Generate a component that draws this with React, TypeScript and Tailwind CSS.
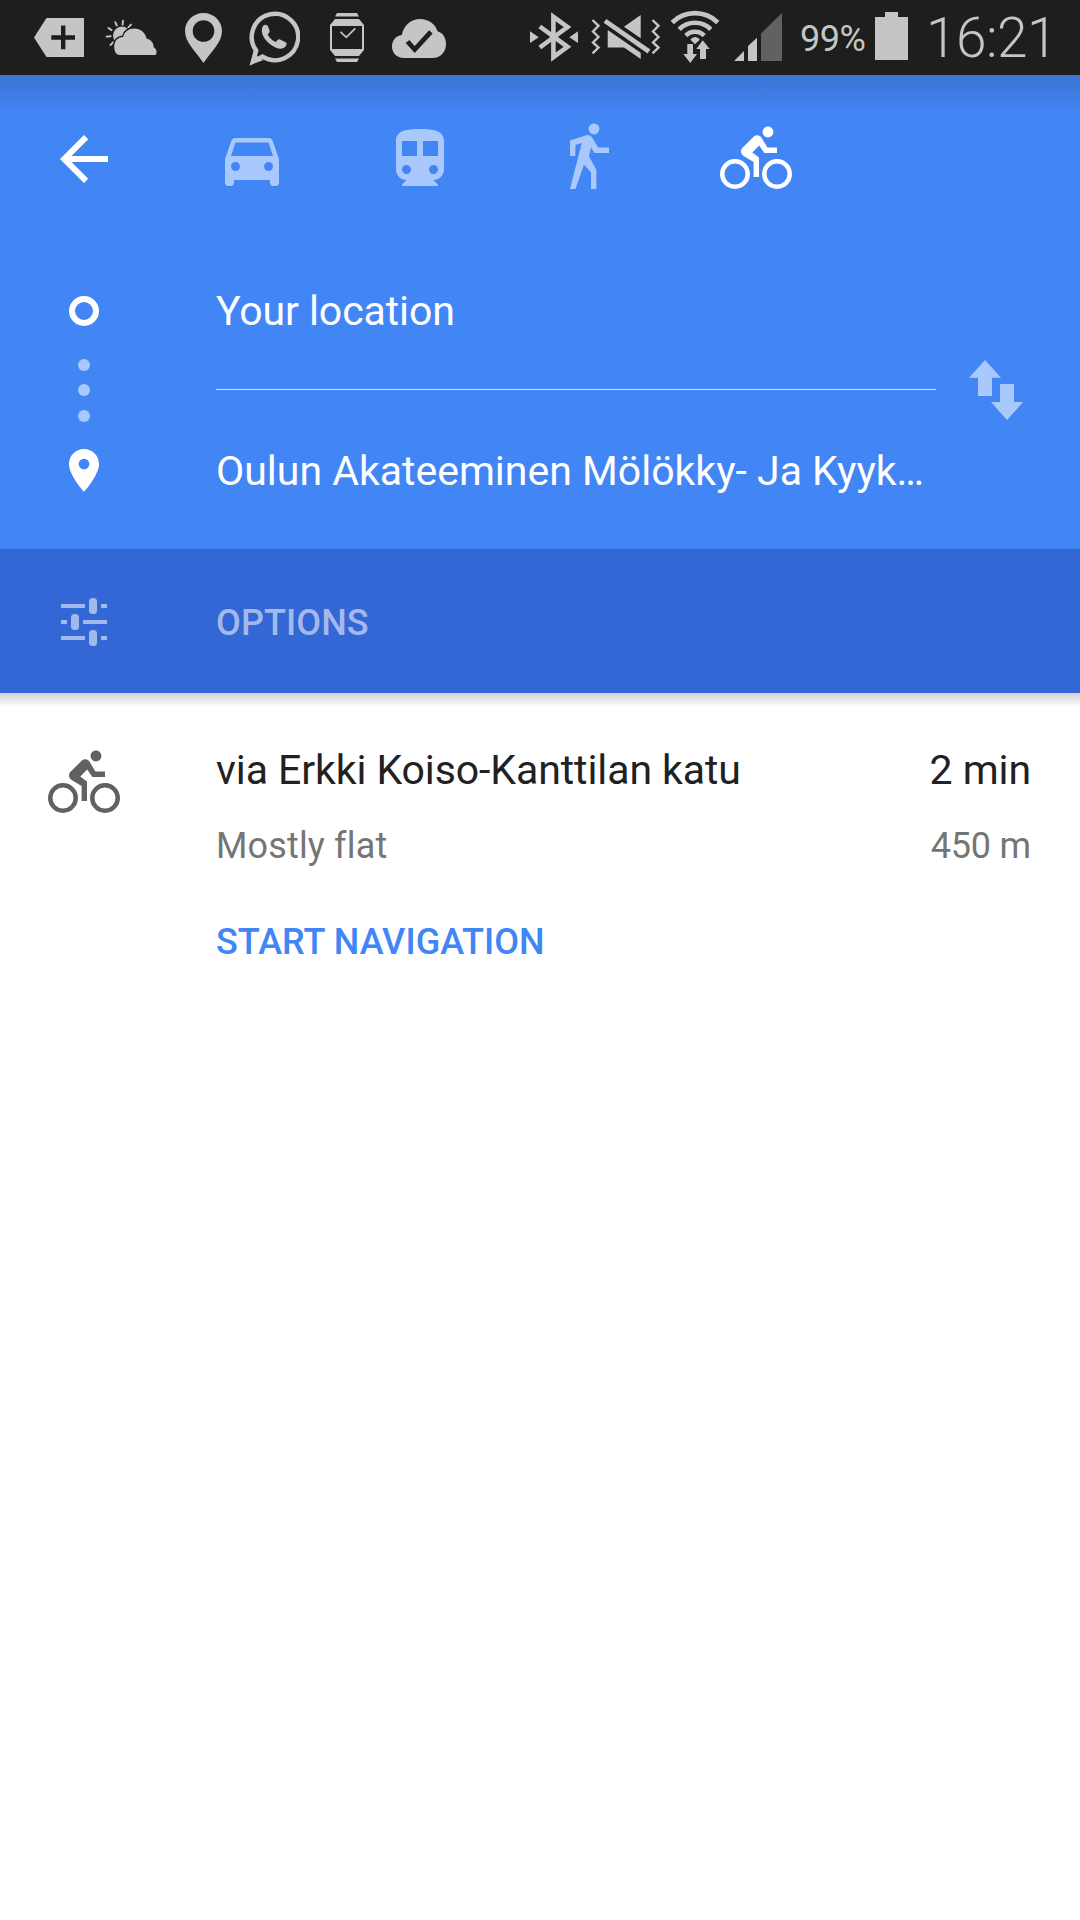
import type { ReactNode } from "react";

type DrawingProps = { box: string; className: string; children: ReactNode };

function Drawing({ box, className, children }: DrawingProps) {
  return (
    <svg viewBox={box} className={`block shrink-0 ${className}`} fill="currentColor" aria-hidden="true">
      {children}
    </svg>
  );
}

const paths = {
  back: "M20 11H7.83l5.59-5.59L12 4l-8 8 8 8 1.41-1.41L7.83 13H20v-2z",
  car: "M18.92 6.01C18.72 5.42 18.16 5 17.5 5h-11c-.66 0-1.21.42-1.42 1.01L3 12v8c0 .55.45 1 1 1h1c.55 0 1-.45 1-1v-1h12v1c0 .55.45 1 1 1h1c.55 0 1-.45 1-1v-8l-2.08-5.99zM6.5 16c-.83 0-1.5-.67-1.5-1.5S5.67 13 6.5 13s1.5.67 1.5 1.5S7.33 16 6.5 16zm11 0c-.83 0-1.5-.67-1.5-1.5s.67-1.5 1.5-1.5 1.5.67 1.5 1.5-.67 1.5-1.5 1.5zM5 11l1.5-4.5h11L19 11H5z",
  train:
    "M12 2c-4.42 0-8 .5-8 4v9.5C4 17.43 5.57 19 7.5 19L6 20.5v.5h12v-.5L16.5 19c1.93 0 3.5-1.57 3.5-3.5V6c0-3.5-3.58-4-8-4zM7.5 17c-.83 0-1.5-.67-1.5-1.5S6.67 14 7.5 14s1.5.67 1.5 1.5S8.33 17 7.5 17zm3.5-6H6V6h5v5zm5.5 6c-.83 0-1.5-.67-1.5-1.5s.67-1.5 1.5-1.5 1.5.67 1.5 1.5-.67 1.5-1.5 1.5zm1.5-6h-5V6h5v5z",
  walk: "M14 3.8c.99 0 1.8-.81 1.8-1.8 0-1-.81-1.8-1.8-1.8-1 0-1.8.81-1.8 1.8 0 .99.8 1.8 1.8 1.8zm.12 6.2H19V8.2h-3.62l-2-3.33c-.3-.5-.84-.83-1.46-.83-.17 0-.34.03-.49.07L6 5.8V11h1.8V7.33l2.11-.66L6 22h1.8l2.87-8.11L13 16.4V22h1.8v-6.41l-2.49-4.54.73-2.87L14.12 10z",
  bike: "M16 4.8c.99 0 1.8-.81 1.8-1.8s-.81-1.8-1.8-1.8c-1 0-1.8.81-1.8 1.8S15 4.8 16 4.8zM19 17m-5 0a5 5 0 1 0 10 0a5 5 0 1 0-10 0zm1.5 0a3.5 3.5 0 1 1 7 0a3.5 3.5 0 1 1-7 0zM14.8 10H19V8.2h-3.2l-1.93-3.27c-.3-.5-.84-.83-1.46-.83-.47 0-.89.19-1.2.5L7.5 8.29C7.19 8.6 7 9.03 7 9.5c0 .63.33 1.16.85 1.47L11.2 13v5H13v-6.5l-2.25-1.65 2.32-2.35L14.8 10zM5 17m-5 0a5 5 0 1 0 10 0a5 5 0 1 0-10 0zm1.5 0a3.5 3.5 0 1 1 7 0a3.5 3.5 0 1 1-7 0z",
};

function Icon({ name, className = "" }: { name: keyof typeof paths; className?: string }) {
  return (
    <Drawing box="0 0 24 24" className={`size-[72px] ${className}`}>
      <path fillRule="evenodd" d={paths[name]} />
    </Drawing>
  );
}

function StatusBar() {
  return (
    <div className="flex h-[75px] items-start bg-[#1e1e1e] text-[#c5c5c5]">
      <Drawing box="34 0 50 75" className="ml-[34px] h-[75px] w-[50px]">
        <path d="M46.5 18H84v39H46.5L34 37.5z" />
        <path d="M51.3 37.5H75M63.2 25.5v23.7" stroke="#1e1e1e" strokeWidth="4.4" />
      </Drawing>
      <Drawing box="105 0 52 75" className="ml-[21px] h-[75px] w-[52px]">
        <circle cx="122" cy="35.5" r="9" />
        <g stroke="currentColor" strokeWidth="1.9" strokeLinecap="round">
          <path d="M106.6 36.6l4-.3M108.4 28l3.2 2.1M115.3 22.2l1.5 3.4M123 20.8l-.4 3.8M131 24.6l-2.6 2.8M110.5 45l2.8-2.8" />
        </g>
        <path
          d="M120 55h35.5c1.8-2 1.4-6-1.8-7.8 0-4.5-2.8-7.7-7.2-8.8C145 32 140 28.6 134.5 28.6c-5.7 0-10 3-11.3 8.4C117.5 37 114 41.5 114.2 47.5c.2 4 2 7.5 5.8 7.5z"
          stroke="#1e1e1e"
          strokeWidth="3"
          paintOrder="stroke"
        />
      </Drawing>
      <Drawing box="185 0 37 75" className="ml-[28px] h-[75px] w-[37px]">
        <path
          fillRule="evenodd"
          d="M203.5 13C193.3 13 185 21 185 31c0 11.5 10.5 20 18.5 32C211.5 51 222 42.5 222 31c0-10-8.3-18-18.5-18zM203.5 20.2a10.8 10.8 0 1 1 0 21.6a10.8 10.8 0 0 1 0-21.6z"
        />
      </Drawing>
      <Drawing box="249 0 52 75" className="ml-[26px] mr-px h-[75px] w-[52px]">
        <path
          fill="none"
          stroke="currentColor"
          strokeWidth="4.4"
          d="M257.2 50.6A23.2 23.2 0 1 1 263.6 56.6L254 61.5z"
        />
        <path d="M251.2 65l3.6-15 5 8.5 5 1.5z" />
        <path d="M264.2 25.7c2-1.6 4.2-.8 5.1 1.5l1.2 3.1c.6 1.6-.6 2.7-1.7 4.1 1.7 3.5 4.3 6.1 8 7.6 1.4-1.6 2.5-3.2 4.2-2.5l5.6 2.7c1.6.8 1 3.1-.3 4.5-2.1 2.2-5.5 2.6-9.3 1-6.2-2.6-11.5-7.9-13.5-13.2-1.1-3.2-1-6.8.7-8.8z" />
      </Drawing>
      <Drawing box="330 0 34 75" className="ml-[29px] h-[75px] w-[34px]">
        <path d="M337 13h20l2 3.5h-24zM335 58.5h24L357 62h-20z" />
        <path fillRule="evenodd" d="M335 19h24l5 6v25l-5 6h-24l-5-6V25zM332 26v23h30V26z" />
        <path d="M340.5 31.8l5.8 5.5 9-9" fill="none" stroke="currentColor" strokeWidth="1.7" />
      </Drawing>
      <Drawing box="392 0 54 75" className="ml-[28px] h-[75px] w-[54px]">
        <path d="M403.5 58C397 58 392 53 392 46.5c0-6 4-10.8 9.8-11.4C403.5 25.5 411 19 420 19c8.5 0 15.5 5 17.5 12.3C443 32.8 446 38 446 44c0 8-5.5 14-13.5 14z" />
        <path d="M407.5 41.5l7.2 8 16.2-17.7" fill="none" stroke="#1e1e1e" strokeWidth="4.8" />
      </Drawing>
      <Drawing box="530 0 48 75" className="ml-[84px] h-[75px] w-[48px]">
        <path
          d="M539.8 26.5L567.5 46.8 553.4 57.2V16.8L567.5 27 539.8 47.5"
          fill="none"
          stroke="currentColor"
          strokeWidth="4.6"
        />
        <path d="M530 31.3V43l8.7-5.8zM578 31.3V43l-8.7-5.8z" />
      </Drawing>
      <Drawing box="591 0 70 75" className="ml-[13px] h-[75px] w-[70px]">
        <path
          d="M592.5 20l6 5.8-5.5 5.7 5.5 5.5-5.5 5.5 5.5 5-6 5.8M652.5 20l6 5.8-5.5 5.7 5.5 5.5-5.5 5.5 5.5 5-6 5.8"
          fill="none"
          stroke="currentColor"
          strokeWidth="2.4"
        />
        <path d="M624 26.7L640.7 15v23.2zM607.7 30v17.5H624L640.7 59v-6.2z" />
        <path d="M605 20.9l44 30.6" stroke="currentColor" strokeWidth="4.8" />
      </Drawing>
      <Drawing box="670 0 50 75" className="ml-[9px] h-[75px] w-[50px]">
        <path
          d="M672.2 22.5a32.5 32.5 0 0 1 45.6 0M679.2 29.3a22.3 22.3 0 0 1 31.6 0M685.8 35.6a13 13 0 0 1 18.4 0"
          fill="none"
          stroke="currentColor"
          strokeWidth="4.6"
        />
        <path d="M690.4 39.8c2.6-3.6 6.8-3.6 9.4 0L695 44.2z" />
        <path
          d="M702.7 40.3l7 8.7H706v10h-6V49h-3.7zM687.3 44h5.7v10h4l-6.7 9-7-9h4z"
          stroke="#1e1e1e"
          strokeWidth="1"
          paintOrder="stroke"
        />
      </Drawing>
      <Drawing box="734 0 48 75" className="ml-[14px] h-[75px] w-[48px]">
        <path d="M734 61h10V51zM748 61h9V37.7l-9 8.3z" />
        <path d="M761 61h21V13l-21 20.5z" fill="#616161" />
      </Drawing>
      <span className="ml-[18px] mt-[14px] w-[66px] whitespace-nowrap text-[36px] leading-[50px] tracking-[-0.5px]">99%</span>
      <Drawing box="875 0 33 75" className="ml-[9px] h-[75px] w-[33px]">
        <path d="M885 12h13v5h10v43h-33V17h10z" />
      </Drawing>
      <span className="ml-[18px] mt-[7px] whitespace-nowrap text-[55px] font-light leading-[62px] tracking-[-0.5px]">16:21</span>
    </div>
  );
}

function TravelModes() {
  return (
    <nav className="flex h-[168px] items-start bg-linear-to-b from-[#3c74d4] to-[#4286f6] to-25% pl-12 pt-12">
      <Icon name="back" />
      <div className="ml-24 flex gap-24">
        <Icon name="car" className="text-[#a9c8fb]" />
        <Icon name="train" className="text-[#a9c8fb]" />
        <Icon name="walk" className="text-[#a9c8fb]" />
        <Icon name="bike" />
      </div>
    </nav>
  );
}

function Endpoints() {
  return (
    <section className="flex h-[306px] text-[41px] leading-[60px]">
      <div className="flex w-[168px] flex-col items-center pt-[53px]">
        <div className="size-[30px] rounded-full border-[6px] border-white" />
        <div className="mt-[32.5px] flex flex-col gap-[13.5px]">
          <div className="size-3 rounded-full bg-[#a9c8fb]" />
          <div className="size-3 rounded-full bg-[#a9c8fb]" />
          <div className="size-3 rounded-full bg-[#a9c8fb]" />
        </div>
        <Drawing box="5 2 14 20" className="mt-[27px] h-[43px] w-[30px]">
          <path d="M12 2C8.13 2 5 5.13 5 9c0 5.25 7 13 7 13s7-7.75 7-13c0-3.87-3.13-7-7-7zm0 9.5a2.5 2.5 0 0 1 0-5 2.5 2.5 0 0 1 0 5z" />
        </Drawing>
      </div>
      <div className="ml-12 w-[720px] pt-[38px]">
        <div className="tracking-[-0.08px]">Your location</div>
        <div className="mt-[48px] h-px bg-[#d0e1fd]" />
        <div className="mt-[51px] whitespace-nowrap">Oulun Akateeminen Mölökky- Ja Kyyk…</div>
      </div>
      <Drawing box="969 360 54 60" className="ml-[33px] mt-[117px] h-[60px] w-[54px] text-[#a9c8fb]">
        <path d="M985 360l16 17.7h-9V396h-14v-18.3h-9zM1000 384h14v18h9l-16 18-16-18h9z" />
      </Drawing>
    </section>
  );
}

function OptionsBar() {
  return (
    <section className="flex h-36 items-center bg-[#3367d6] text-[#a3b9ec]">
      <Drawing box="61 598 46 48" className="ml-[61px] mt-[2px] h-[48px] w-[46px]">
        <path d="M61 604h24v4H61zM101 604h6v4h-6zM61 620h6v4h-6zM83 620h24v4H83zM61 636h24v4H61zM101 636h6v4h-6z" />
        <rect x="89" y="598" width="8" height="16" rx="3.5" />
        <rect x="71" y="614" width="8" height="16" rx="3.5" />
        <rect x="89" y="630" width="8" height="16" rx="3.5" />
      </Drawing>
      <span className="ml-[109px] mt-[3px] text-[36px] font-medium leading-[48px] tracking-[0.1px]">OPTIONS</span>
    </section>
  );
}

function Route() {
  return (
    <article className="flex pr-[49px]">
      <Icon name="bike" className="ml-12 mt-10 text-[#616161]" />
      <div className="ml-24 grow">
        <div className="mt-[33px] flex justify-between text-[41px] leading-[60px] tracking-[-0.08px] text-[#212121]">
          <span>via Erkki Koiso-Kanttilan katu</span>
          <span>2 min</span>
        </div>
        <div className="mt-[22px] flex justify-between text-[36px] leading-[48px] text-[#757575] [font-variant-ligatures:none]">
          <span className="tracking-[0.15px]">Mostly flat</span>
          <span className="tracking-[-0.2px]">450 m</span>
        </div>
        <div className="mt-[48px] text-[36px] font-medium leading-[48px] tracking-[0.05px] text-[#4285f4]">START NAVIGATION</div>
      </div>
    </article>
  );
}

export default function App() {
  return (
    <main className="h-[1920px] w-[1080px] overflow-hidden bg-white font-['Roboto',sans-serif]">
      <StatusBar />
      <header className="bg-[#4286f6] text-white">
        <TravelModes />
        <Endpoints />
        <OptionsBar />
      </header>
      <div className="h-[14px] bg-linear-to-b from-[#d3d3d3] to-white" />
      <Route />
    </main>
  );
}
